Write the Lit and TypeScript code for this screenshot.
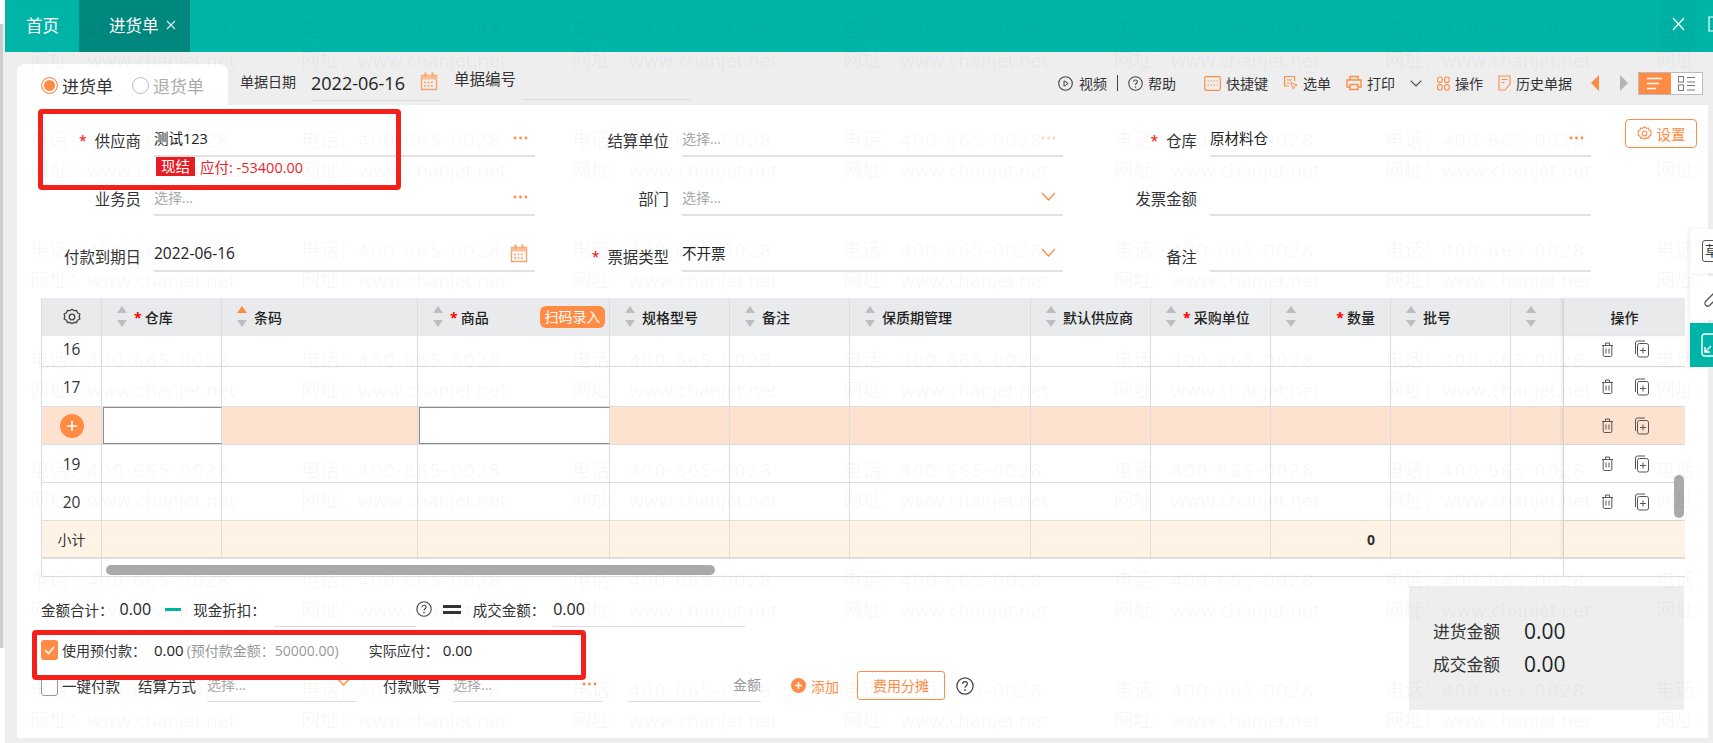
import { LitElement, html, css, svg } from 'lit';
import { customElement } from 'lit/decorators.js';

const ORANGE = '#ff8b45';

const icon = (w: number, h: number, body: unknown, cls = '') =>
  html`<svg class="ico ${cls}" width=${w} height=${h} viewBox="0 0 ${w} ${h}" fill="none">${body}</svg>`;

const calendar = () =>
  icon(18, 20, svg`
    <path d="M1.5 4.5h15v14h-15z" stroke="#f9a36b" stroke-width="1.4"/>
    <path d="M1.5 4.5h15v4h-15z" fill="#fbbd92"/>
    <path d="M5.5 1.5v4M12.5 1.5v4" stroke="#f9a36b" stroke-width="2"/>
    <path d="M4 11.5h10M4 15h10" stroke="#f9a36b" stroke-width="1.4" stroke-dasharray="2 1.4"/>`);

const dots = (faint = false) =>
  icon(15, 4, svg`<g fill=${faint ? '#fbd5bd' : ORANGE}><circle cx="2" cy="2" r="1.4"/><circle cx="7.5" cy="2" r="1.4"/><circle cx="13" cy="2" r="1.4"/></g>`);

const chevron = () => icon(15, 9, svg`<path d="M1 1l6.5 7L14 1" stroke=${ORANGE} stroke-width="1.3"/>`);

const gear = (color: string, size = 18) =>
  html`<svg class="ico" width=${size} height=${size} viewBox="0 0 18 18" fill="none" stroke=${color} stroke-width="1.3">
    <path d="M9 1.2l2 1.5 2.5-.2 1.1 2.3 2.2 1.2-.5 2.5.5 2.5-2.2 1.2-1.1 2.3-2.5-.2-2 1.5-2-1.5-2.5.2-1.1-2.3-2.2-1.2.5-2.5-.5-2.5 2.2-1.2 1.1-2.3 2.5.2z"/>
    <circle cx="9" cy="9" r="2.8"/>
  </svg>`;

const question = (size = 15, color = '#444') =>
  html`<svg class="ico" width=${size} height=${size} viewBox="0 0 16 16" fill="none">
    <circle cx="8" cy="8" r="7.2" stroke=${color} stroke-width="1.1"/>
    <path d="M5.9 6.2C6 4.9 6.9 4.2 8 4.2c1.2 0 2.1.8 2.1 1.9 0 1.6-2.1 1.7-2.1 3.4" stroke=${color} stroke-width="1.1"/>
    <circle cx="8" cy="11.6" r=".8" fill=${color}/>
  </svg>`;

const trash = () =>
  icon(13, 17, svg`<g stroke="#555" stroke-width="1"><path d="M1 4.5h11M4.5 4.5V2h4v2.5M2.2 4.5v9.8a1.2 1.2 0 0 0 1.2 1.2h6.2a1.2 1.2 0 0 0 1.2-1.2V4.5M5 7.5v5M8 7.5v5"/></g>`);

const copyPlus = () =>
  icon(15, 18, svg`<g stroke="#555" stroke-width="1"><path d="M1.5 14V3a2 2 0 0 1 2-2H11"/><rect x="3.5" y="3.5" width="11" height="13.5" rx="2"/><path d="M9 7.5v6M6 10.5h6"/></g>`);

const sortArrows = (active = false) =>
  html`<svg class="ico" width="10" height="22" viewBox="0 0 10 22">
    <path d="M5 0l5 7H0z" fill=${active ? ORANGE : '#bbbdc0'}/>
    <path d="M5 21l5-7H0z" fill="#bbbdc0"/>
  </svg>`;

interface HeadCol {
  label?: string;
  star?: boolean;
  active?: boolean;
  right?: boolean;
  scan?: boolean;
}

const HEAD: HeadCol[] = [
  { label: '仓库', star: true },
  { label: '条码', active: true },
  { label: '商品', star: true, scan: true },
  { label: '规格型号' },
  { label: '备注' },
  { label: '保质期管理' },
  { label: '默认供应商' },
  { label: '采购单位', star: true },
  { label: '数量', star: true, right: true },
  { label: '批号' },
  {},
];

const ROWS = [
  { no: '16', cls: 'r16' },
  { no: '17', cls: 'r17' },
  { no: '', cls: 'r18' },
  { no: '19', cls: 'r38' },
  { no: '20', cls: 'r38' },
];

const FIELDS = [
  { label: '供应商', star: true, value: '测试123', end: 'dots', tall: true },
  { label: '结算单位', placeholder: '选择...', end: 'faint' },
  { label: '仓库', star: true, value: '原材料仓', end: 'dots' },
  { label: '业务员', placeholder: '选择...', end: 'dots' },
  { label: '部门', placeholder: '选择...', end: 'chevron' },
  { label: '发票金额' },
  { label: '付款到期日', value: '2022-06-16', end: 'calendar', date: true },
  { label: '票据类型', star: true, value: '不开票', end: 'chevron' },
  { label: '备注' },
];

@customElement('app-root')
export class AppRoot extends LitElement {
  static styles = css`
    :host {
      display: block;
      position: relative;
      width: 100%;
      height: 743px;
      overflow: hidden;
      background: #fff;
      color: #333;
      font-family: 'Open Sans', 'Noto Sans CJK SC', sans-serif;
      font-size: 14px;
    }
    .ico { display: block; flex: none; }

    .page { display: flex; height: 743px; }
    .edge { width: 5px; margin-top: 24px; height: 624px; background: #eee; border-left: 3px solid #ccc; box-sizing: border-box; }
    .main { flex: 1; min-width: 0; }

    .topbar { display: flex; align-items: stretch; height: 52px; background: #00b5a8; color: #fff; font-size: 16.5px; }
    .tab { display: flex; align-items: center; padding-bottom: 2px; box-sizing: border-box; }
    .tab.home { width: 74px; padding-left: 21px; }
    .tab.active { width: 111px; padding-left: 30px; background: #00877e; gap: 7px; }
    .winbtns { margin-left: auto; display: flex; }
    .winbtn { width: 37px; background: #00b1a4; display: flex; align-items: center; justify-content: center; padding-bottom: 4px; }
    .winrest { width: 16px; display: flex; align-items: center; padding: 0 0 4px 11px; box-sizing: border-box; overflow: hidden; }

    .work { background: #eee; height: 691px; padding: 12px 5px 5px 12px; box-sizing: border-box; }

    .head { display: flex; height: 41px; }
    .typetab { width: 211px; background: #fff; border-radius: 8px 8px 0 0; display: flex; align-items: center; padding: 2px 0 0 24px; box-sizing: border-box; font-size: 17px; }
    .radio { display: flex; align-items: center; gap: 4px; }
    .radio + .radio { margin-left: 19px; color: #aaa; }
    .dot { width: 17px; height: 17px; border-radius: 50%; border: 1px solid #bbb; box-sizing: border-box; background: #fff; }
    .dot.on { border-color: #ff8b45; box-shadow: inset 0 0 0 2px #fff; background: #ff8b45; }

    .doc { display: flex; margin-left: 12px; position: relative; }
    .doc-label { height: 36px; line-height: 36px; width: 57px; white-space: nowrap; }
    .doc-date { margin-left: 14px; width: 130px; height: 35px; border-bottom: 1px solid #ddd; display: flex; align-items: center; font-size: 18px; color: #222; padding-top: 1px; }
    .doc-date .ico { margin-left: 15px; margin-top: -3px; }
    .doc-label.no { margin-left: 13px; line-height: 30px; }
    .doc-input { margin-left: 12px; width: 168px; height: 35px; border-bottom: 1px solid #ddd; }

    .tools { margin-left: auto; display: flex; align-items: center; height: 38px; padding-right: 5px; gap: 15px; }
    .tool { display: flex; align-items: center; gap: 5px; white-space: nowrap; }
    .tool.sep { gap: 6px; }
    .bar { width: 1px; height: 16px; background: #444; margin: 0 -5px; }
    .tool.shortcut { margin-left: 13px; }
    .carets { display: flex; gap: 21px; margin-left: 4px; }
    .toggle { display: flex; width: 65px; height: 23px; margin-left: -5px; border: 1px solid #bbb; box-sizing: border-box; }
    .toggle div { flex: 1; display: flex; align-items: center; justify-content: center; background: #fff; }
    .toggle .on { background: #ff8b45; }

    .panel { background: #fff; width: 1691px; height: 633px; position: relative; }

    .form { display: grid; grid-template-columns: repeat(3, 528px); grid-template-rows: 52px 59px 56px; align-items: end; }
    .field { display: grid; grid-template-columns: 124px 381px; column-gap: 13px; align-items: end; }
    .flabel { height: 36px; display: flex; align-items: center; justify-content: flex-end; font-size: 15.4px; padding-top: 3px; box-sizing: border-box; white-space: nowrap; }
    .field:nth-child(n + 4):nth-child(-n + 6) .flabel { padding-top: 0; }
    .field:nth-child(n + 7) .flabel { padding-top: 4px; }
    .star { color: #f00; margin-right: 8px; font-size: 14px; }
    .ctl { height: 37px; box-sizing: border-box; border-bottom: 2px solid #e2e2e2; display: flex; align-items: center; justify-content: space-between; padding-right: 7px; position: relative; font-size: 14.5px; color: #222; }
    .ctl.date { font-size: 15.5px; }
    .ph { color: #aaa; font-size: 14px; }
    .due { position: absolute; top: 100%; left: 2px; display: flex; align-items: center; gap: 5px; color: #e8262d; font-size: 14.5px; white-space: nowrap; margin-top: 1px; }
    .due b { background: #e81c24; color: #fff; font-weight: 400; width: 39px; height: 19px; line-height: 19px; text-align: center; font-size: 14.5px; }

    .table { margin: 26px 0 0 24px; width: 1644px; border-left: 1px solid #ddd; box-sizing: border-box; }
    .row { display: grid; grid-template-columns: 60px 120px 196px 192px 120px 120px 181px 120px 120px 120px 120px 53px 121px; box-sizing: border-box; border-bottom: 1px solid #ddd; }
    .row > div { border-right: 1px solid #ddd; display: flex; align-items: center; box-sizing: border-box; min-width: 0; }
    .row > div:last-child { border-right: none; }
    .hd { height: 38px; background: #e8eaec; border-bottom: none; }
    .hd > div { padding-left: 15px; gap: 7px; font-weight: 500; white-space: nowrap; color: #222; }
    .hd .req { color: #f00; margin-right: -4px; font-weight: 700; }
    .hd .right { flex: 1; text-align: right; margin-right: 15px; }
    .hd .right .req { margin-right: 3px; }
    .hd .scan { margin-left: auto; margin-right: 4px; background: #ff8b45; color: #fff; width: 65px; height: 22px; line-height: 22px; border-radius: 6px; text-align: center; font-weight: 400; font-size: 14px; }
    .hd .num { padding-left: 0; justify-content: center; }
    .hd .op { padding: 0; justify-content: center; box-shadow: -3px 0 3px rgba(0, 0, 0, 0.05); }

    .r16 { height: 31px; }
    .r16 .no, .r16 .op { padding-bottom: 4px; }
    .r17 { height: 40px; }
    .r18 { height: 38px; background: #fde2d0; }
    .r38 { height: 38px; }
    .sum { height: 38px; background: #fff3e6; border-bottom: 2px solid #ddd; }
    .no { justify-content: center; font-size: 15.5px; color: #333; }
    .sum .no { font-size: 14px; }
    .op { justify-content: center; gap: 20px; box-shadow: -3px 0 3px rgba(0, 0, 0, 0.05); }
    .cellinput { background: #fff; border: 1px solid #8c8c8c; margin-left: 1px; }
    .plus { width: 24px; height: 24px; border-radius: 50%; background: #ff8b45; color: #fff; display: flex; align-items: center; justify-content: center; }
    .zero { justify-content: flex-end; padding-right: 15px; font-weight: 700; }

    .scroll { display: grid; grid-template-columns: 60px 1462px 121px; height: 18px; border-bottom: 1px solid #ddd; box-sizing: border-box; }
    .scroll > div { border-right: 1px solid #ddd; }
    .scroll > div:last-child { border-right: none; }
    .thumb { width: 609px; height: 10px; margin: 6px 0 0 4px; background: #aaa; border-radius: 5px; }
    .vthumb { position: absolute; left: 1657px; top: 370px; width: 10px; height: 43px; background: #aaa; border-radius: 5px; }

    .foot { display: flex; margin-left: 24px; width: 1643px; justify-content: space-between; }
    .sums { font-size: 14.5px; white-space: nowrap; }
    .frow { display: flex; align-items: center; }
    .f1 { height: 36px; margin-top: 14px; }
    .f2 { height: 24px; margin-top: 11px; font-size: 14px; }
    .f3 { height: 33px; margin-top: 7px; font-size: 14.5px; }
    .val { font-size: 16px; margin-left: 6px; color: #222; }
    .dash { width: 16px; height: 3px; background: #00b5a8; margin: 0 12px 0 14px; }
    .u { align-self: stretch; border-bottom: 1px solid #ddd; box-sizing: border-box; }
    .disc { width: 142px; margin-left: 8px; }
    .eq { width: 18px; height: 9px; border-top: 3px solid #333; border-bottom: 3px solid #333; box-sizing: border-box; margin: 0 12px 0 11px; }
    .total { width: 192px; display: flex; align-items: center; margin-left: 8px; }
    .total .val { margin-left: 0; }
    .check { width: 17px; height: 20px; border-radius: 3px; background: #ff8b45; display: flex; align-items: center; justify-content: center; margin-right: 4px; }
    .check.off { background: #fff; border: 1px solid #999; box-sizing: border-box; }
    .f2 .val { font-size: 15px; margin-left: 8px; }
    .f2 .val.pay { margin-left: 4px; }
    .muted { color: #999; margin-left: 3px; }
    .actual { margin-left: 30px; }
    .settle { margin-left: 18px; }
    .pick { display: flex; align-items: center; justify-content: space-between; width: 150px; color: #aaa; padding-bottom: 3px; font-size: 14px; }
    .pick.a { margin-left: 11px; }
    .pick.b { margin-left: 12px; }
    .pick .up { align-self: flex-start; margin-top: 8px; margin-right: 6px; }
    .pick .dd { margin-right: 6px; }
    .account { margin-left: 26px; }
    .amt { width: 133px; margin-left: 25px; display: flex; align-items: center; justify-content: flex-end; color: #999; padding-bottom: 3px; font-size: 14px; }
    .add { margin-left: 30px; display: flex; align-items: center; gap: 5px; color: #ff8b45; font-size: 14px; }
    .add .plus { width: 15px; height: 15px; }
    .split { margin-left: 18px; width: 88px; height: 29px; line-height: 27px; border: 1px solid #ff8b45; border-radius: 3px; box-sizing: border-box; text-align: center; color: #ff8b45; font-size: 14px; }
    .f3 .q { margin-left: 11px; }

    .amounts { width: 275px; height: 124px; margin-top: 9px; background: #eee; box-sizing: border-box; padding: 28px 0 0 24px; display: grid; grid-template-columns: 68px auto; column-gap: 23px; grid-auto-rows: 33px; align-items: center; justify-content: start; font-size: 16.8px; }
    .amounts span:nth-child(even) { font-size: 21px; color: #222; }

    .setting { position: absolute; left: 1608px; top: 14px; width: 72px; height: 29px; border: 1px solid #ff8b45; border-radius: 4px; box-sizing: border-box; display: flex; align-items: center; justify-content: center; gap: 5px; color: #ff8b45; font-size: 14.5px; }

    .side { position: absolute; right: 0; top: 229px; width: 23px; display: flex; flex-direction: column; gap: 3px; z-index: 3; }
    .side div { height: 44px; background: #fff; display: flex; align-items: center; padding-left: 12px; box-sizing: border-box; overflow: hidden; box-shadow: -2px 0 4px rgba(0, 0, 0, 0.06); }
    .side .cur { background: #00b5a8; padding-left: 11px; }
    .cao { flex: none; width: 20px; height: 22px; border: 1px solid #555; border-radius: 3px; font-size: 14px; line-height: 20px; text-align: center; box-sizing: border-box; }

    .redbox { position: absolute; border: 5px solid #f5201a; border-radius: 4px; box-sizing: border-box; z-index: 5; pointer-events: none; }
    .red1 { left: 38px; top: 109px; width: 363px; height: 81px; }
    .red2 { left: 32px; top: 630px; width: 554px; height: 50px; }

    .marks { position: absolute; inset: 0; pointer-events: none; z-index: 4; padding: 15px 0 0 30px; display: grid; grid-template-columns: repeat(7, 271px); grid-auto-rows: 110px; color: rgba(0, 0, 0, 0.045); font-size: 19px; white-space: nowrap; overflow: hidden; height: 743px; box-sizing: border-box; }
    .marks div { line-height: 30px; }
    .marks i { font-style: normal; letter-spacing: 1.9px; }
  `;

  private renderField(f: (typeof FIELDS)[number]) {
    return html`<div class="field">
      <div class="flabel">${f.star ? html`<span class="star">*</span>` : ''}${f.label}</div>
      <div class="ctl ${f.date ? 'date' : ''}">
        <span class=${f.placeholder ? 'ph' : ''}>${f.value ?? f.placeholder ?? ''}</span>
        ${f.end === 'dots' ? dots() : ''}${f.end === 'faint' ? dots(true) : ''}
        ${f.end === 'chevron' ? chevron() : ''}${f.end === 'calendar' ? calendar() : ''}
        ${f.tall ? html`<div class="due"><b>现结</b>应付: -53400.00</div>` : ''}
      </div>
    </div>`;
  }

  private renderHead() {
    return html`<div class="row hd">
      <div class="num">${gear('#444')}</div>
      ${HEAD.map(
        (c) => html`<div>
          ${sortArrows(c.active)}
          ${c.right ? html`<span class="right"><span class="req">*</span>${c.label}</span>` : ''}
          ${!c.right && c.star ? html`<span class="req">*</span>` : ''}
          ${!c.right && c.label ? html`<span>${c.label}</span>` : ''}
          ${c.scan ? html`<span class="scan">扫码录入</span>` : ''}
        </div>`,
      )}
      <div class="op">操作</div>
    </div>`;
  }

  private renderRow(r: (typeof ROWS)[number]) {
    const editing = r.cls === 'r18';
    return html`<div class="row ${r.cls}">
      <div class="no">
        ${editing
          ? html`<span class="plus">${icon(12, 12, svg`<path d="M6 1v10M1 6h10" stroke="#fff" stroke-width="1.6"/>`)}</span>`
          : r.no}
      </div>
      ${HEAD.map((_, i) => html`<div class=${editing && (i === 0 || i === 2) ? 'cellinput' : ''}></div>`)}
      <div class="op">${trash()}${copyPlus()}</div>
    </div>`;
  }

  render() {
    const marks = Array.from({ length: 49 });
    return html`
      <div class="page">
        <div class="edge"></div>
        <div class="main">
          <div class="topbar">
            <div class="tab home">首页</div>
            <div class="tab active">
              进货单
              ${icon(10, 10, svg`<path d="M1 1l8 8M9 1l-8 8" stroke="#d6f2ef" stroke-width="1.1"/>`)}
            </div>
            <div class="winbtns">
              <div class="winbtn">${icon(13, 14, svg`<path d="M1 1l11 12M12 1L1 13" stroke="#fff" stroke-width="1.2"/>`)}</div>
              <div class="winrest">${icon(13, 16, svg`<path d="M5 1H1v14h4M8 1h4v14H8" stroke="#fff" stroke-width="1.2"/>`)}</div>
            </div>
          </div>
          <div class="work">
            <div class="head">
              <div class="typetab">
                <div class="radio"><span class="dot on"></span>进货单</div>
                <div class="radio"><span class="dot"></span>退货单</div>
              </div>
              <div class="doc">
                <div class="doc-label">单据日期</div>
                <div class="doc-date">2022-06-16${calendar()}</div>
                <div class="doc-label no">单据编号</div>
                <div class="doc-input"></div>
              </div>
              <div class="tools">
                <div class="tool sep">
                  ${icon(15, 15, svg`<circle cx="7.5" cy="7.5" r="6.8" stroke="#444" stroke-width="1.1"/><path d="M6 4.8l4.2 2.7L6 10.2z" stroke="#444"/>`)}视频
                </div>
                <div class="bar"></div>
                <div class="tool">${question()}帮助</div>
                <div class="tool shortcut">
                  ${icon(17, 15, svg`<rect x=".7" y=".7" width="15.6" height="13.6" rx="1.5" stroke=${ORANGE} stroke-width="1.2"/><path d="M3.5 5h10M3.5 9h10" stroke=${ORANGE} stroke-dasharray="1.5 1.5"/>`)}快捷键
                </div>
                <div class="tool">
                  ${icon(15, 16, svg`<path d="M6 11H1.5V1.5h10V6" stroke=${ORANGE} stroke-width="1.2"/><path d="M4 5h5M4 8h2" stroke=${ORANGE}/><path d="M7.5 7.5l6.5 2.5-2.6 1.2-1 3z" stroke=${ORANGE}/>`)}选单
                </div>
                <div class="tool">
                  ${icon(16, 16, svg`<path d="M4 5V1.5h8V5M4 12H1V5h14v7h-3" stroke=${ORANGE} stroke-width="1.4"/><path d="M4 9.5h8v5H4z" stroke=${ORANGE} stroke-width="1.4"/>`)}打印
                </div>
                <div>${icon(12, 7, svg`<path d="M.7.7L6 6l5.3-5.3" stroke="#444" stroke-width="1.1"/>`)}</div>
                <div class="tool">
                  ${icon(13, 15, svg`<g stroke=${ORANGE} stroke-width="1.1"><rect x=".6" y="1" width="4.6" height="5.4" rx="2"/><rect x="7.6" y="1" width="4.6" height="5.4" rx="2"/><rect x=".6" y="8.6" width="4.6" height="5.4" rx="2"/><rect x="7.6" y="8.6" width="4.6" height="5.4" rx="2"/></g>`)}操作
                </div>
                <div class="tool">
                  ${icon(13, 16, svg`<path d="M1 1h11v8l-5 6H1z" stroke=${ORANGE} stroke-width="1.1"/><path d="M3.5 4.5h6M3.5 7.5h3" stroke=${ORANGE}/>`)}历史单据
                </div>
                <div class="carets">
                  ${icon(8, 16, svg`<path d="M8 0v16L0 8z" fill=${ORANGE}/>`)}
                  ${icon(8, 16, svg`<path d="M0 0v16l8-8z" fill="#b4b4b4"/>`)}
                </div>
                <div class="toggle">
                  <div class="on">${icon(15, 13, svg`<path d="M0 1.5h15M0 6.5h12M0 11.5h9" stroke="#fff" stroke-width="1.4"/>`)}</div>
                  <div>${icon(17, 15, svg`<g stroke="#777"><rect x=".5" y=".5" width="5" height="5.6"/><rect x=".5" y="8.9" width="5" height="5.6"/><path d="M9 1.5h8M9 6h8M9 9.5h8M9 14h8"/></g>`)}</div>
                </div>
              </div>
            </div>
            <div class="panel">
              <div class="setting">${gear(ORANGE, 15)}设置</div>
              <div class="form">${FIELDS.map((f) => this.renderField(f))}</div>
              <div class="table">
                ${this.renderHead()}
                ${ROWS.map((r) => this.renderRow(r))}
                <div class="row sum">
                  <div class="no">小计</div>
                  ${HEAD.map((c) => html`<div class=${c.right ? 'zero' : ''}>${c.right ? '0' : ''}</div>`)}
                  <div class="op"></div>
                </div>
                <div class="scroll">
                  <div></div>
                  <div><div class="thumb"></div></div>
                  <div></div>
                </div>
              </div>
              <div class="vthumb"></div>
              <div class="foot">
                <div class="sums">
                  <div class="frow f1">
                    金额合计：<span class="val">0.00</span>
                    <span class="dash"></span>
                    现金折扣：
                    <span class="u disc"></span>
                    ${question(16)}
                    <span class="eq"></span>
                    成交金额：
                    <span class="u total"><span class="val">0.00</span></span>
                  </div>
                  <div class="frow f2">
                    <span class="check">${icon(11, 9, svg`<path d="M1 4l3.5 3.5L10 1" stroke="#fff" stroke-width="1.6"/>`)}</span>
                    使用预付款：<span class="val">0.00</span>
                    <span class="muted">(预付款金额：50000.00)</span>
                    <span class="actual">实际应付：</span><span class="val pay">0.00</span>
                  </div>
                  <div class="frow f3">
                    <span class="check off"></span>
                    一键付款
                    <span class="settle">结算方式</span>
                    <span class="u pick a">选择...<span class="up">${chevron()}</span></span>
                    <span class="account">付款账号</span>
                    <span class="u pick b">选择...<span class="dd">${dots()}</span></span>
                    <span class="u amt">金额</span>
                    <span class="add">
                      <span class="plus">${icon(9, 9, svg`<path d="M4.5 1v7M1 4.5h7" stroke="#fff" stroke-width="1.5"/>`)}</span>添加
                    </span>
                    <span class="split">费用分摊</span>
                    <span class="q">${question(18)}</span>
                  </div>
                </div>
                <div class="amounts">
                  <span>进货金额</span><span>0.00</span>
                  <span>成交金额</span><span>0.00</span>
                </div>
              </div>
            </div>
          </div>
        </div>
      </div>

      <div class="side">
        <div><span class="cao">草</span></div>
        <div>${icon(20, 24, svg`<path d="M16 3L4 15c-3 3 1 7 4 4L20 7" stroke="#555" stroke-width="1.3"/>`)}</div>
        <div class="cur">${icon(20, 24, svg`<rect x="1" y="1" width="22" height="22" rx="3" stroke="#fff" stroke-width="1.4"/><path d="M10 13l-6 6M4 14v5h5" stroke="#fff" stroke-width="1.4"/>`)}</div>
      </div>

      <div class="redbox red1"></div>
      <div class="redbox red2"></div>

      <div class="marks">
        ${marks.map(
          () => html`<div>电话：<i>400-665-0028</i><br />网址：www.chanjet.net</div>`,
        )}
      </div>
    `;
  }
}
